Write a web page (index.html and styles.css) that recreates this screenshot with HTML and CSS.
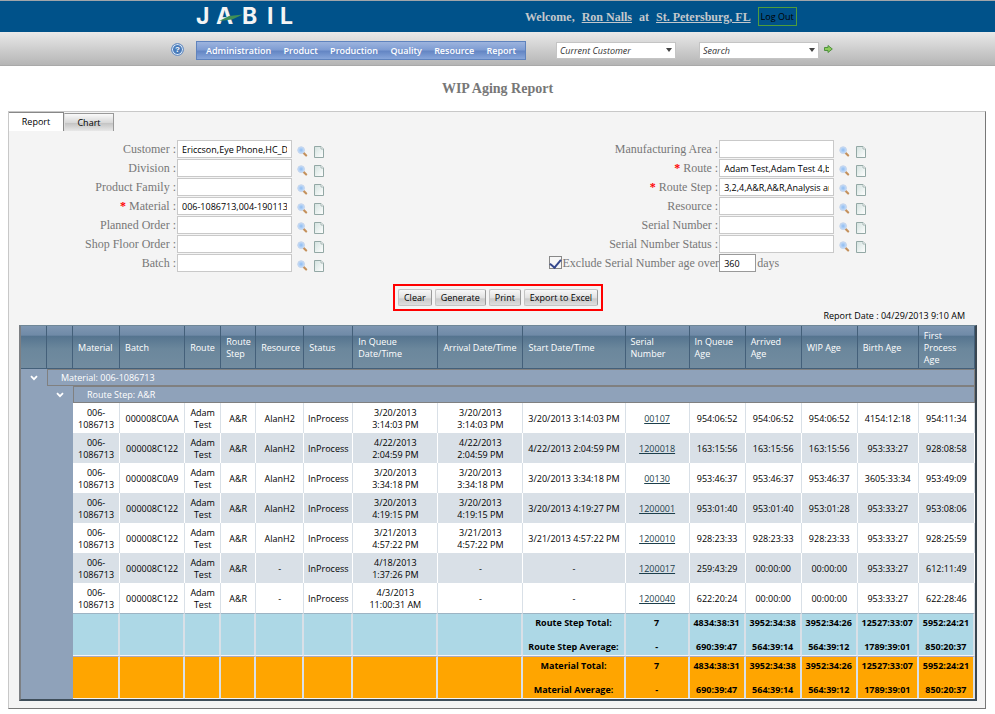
FILE: index.html
```html
<!DOCTYPE html>
<html lang="en">
<head>
<meta charset="utf-8">
<title>WIP Aging Report</title>
<link rel="stylesheet" href="styles.css">
</head>
<body>
<svg class="defs" aria-hidden="true">
  <defs>
    <radialGradient id="lens"><stop offset="0" stop-color="#8fbcf0"/><stop offset="1" stop-color="#c9dffa"/></radialGradient>
    <linearGradient id="sheet" x1="0" y1="0" x2="1" y2="1"><stop offset="0" stop-color="#d3e2df"/><stop offset="1" stop-color="#ffffff"/></linearGradient>
    <symbol id="find" viewBox="0 0 12 12">
      <path d="M7 7.300 10 10.300" stroke="#c4915c" stroke-width="2.400" stroke-linecap="round"/>
      <circle cx="4.500" cy="4.500" r="3.700" fill="url(#lens)" stroke="#c3d3ea"/>
    </symbol>
    <symbol id="page" viewBox="0 0 10 12">
      <path d="M.5.5h6.500l2.500 2.500v8.500h-9z" fill="url(#sheet)" stroke="#93a8a5"/>
      <path d="M7 .5v2.500h2.500" fill="#fff" stroke="#a7b7b5"/>
    </symbol>
    <symbol id="chev" viewBox="0 0 8 6"><path d="M1 1.200 4 4.200 7 1.200" fill="none" stroke="#fff" stroke-width="1.800"/></symbol>
  </defs>
</svg>

<header class="top">
  <svg class="logo" viewBox="0 0 110 32" role="img" aria-label="Jabil">
    <text class="wordmark" x="0 20 46 71 84" y="23">JABIL</text>
    <path d="M23 20 33 15 47 13.500 36 18.500z" fill="#3f8f56"/>
  </svg>
  <div class="account">
    <span>Welcome,</span><a href="#">Ron Nalls</a><span>at</span><a href="#">St. Petersburg, FL</a>
    <button class="logout" type="button">Log Out</button>
  </div>
</header>

<div class="toolbar">
  <button class="help" type="button" aria-label="Help">?</button>
  <nav class="menu">
    <a href="#">Administration</a><a href="#">Product</a><a href="#">Production</a><a href="#">Quality</a><a href="#">Resource</a><a href="#">Report</a>
  </nav>
  <div class="pick customer"><select aria-label="Current Customer"><option>Current Customer</option></select></div>
  <div class="pick search"><select aria-label="Search"><option>Search</option></select></div>
  <button class="go" type="button" aria-label="Go">
    <svg viewBox="0 0 9 8"><path d="M.5 2.500h3.500v-2L8.300 4 4 7.500v-2H.5z" fill="#8ccb5a" stroke="#4f9140"/></svg>
  </button>
</div>

<h1>WIP Aging Report</h1>

<main class="panel">
  <div class="tabs">
    <button class="tab active" type="button">Report</button><button class="tab" type="button">Chart</button>
  </div>

  <form class="filters">
    <div class="group">
      <div class="field"><label for="customer">Customer :</label><input id="customer" value="Ericcson,Eye Phone,HC_DELL"><button type="button" aria-label="Find"><svg class="find"><use href="#find"/></svg></button><button type="button" aria-label="Clear"><svg class="page"><use href="#page"/></svg></button></div>
      <div class="field"><label for="division">Division :</label><input id="division"><button type="button" aria-label="Find"><svg class="find"><use href="#find"/></svg></button><button type="button" aria-label="Clear"><svg class="page"><use href="#page"/></svg></button></div>
      <div class="field"><label for="family">Product Family :</label><input id="family"><button type="button" aria-label="Find"><svg class="find"><use href="#find"/></svg></button><button type="button" aria-label="Clear"><svg class="page"><use href="#page"/></svg></button></div>
      <div class="field"><label for="material"><b>*</b> Material :</label><input id="material" value="006-1086713,004-190113"><button type="button" aria-label="Find"><svg class="find"><use href="#find"/></svg></button><button type="button" aria-label="Clear"><svg class="page"><use href="#page"/></svg></button></div>
      <div class="field"><label for="planned">Planned Order :</label><input id="planned"><button type="button" aria-label="Find"><svg class="find"><use href="#find"/></svg></button><button type="button" aria-label="Clear"><svg class="page"><use href="#page"/></svg></button></div>
      <div class="field"><label for="shop">Shop Floor Order :</label><input id="shop"><button type="button" aria-label="Find"><svg class="find"><use href="#find"/></svg></button><button type="button" aria-label="Clear"><svg class="page"><use href="#page"/></svg></button></div>
      <div class="field"><label for="batch">Batch :</label><input id="batch"><button type="button" aria-label="Find"><svg class="find"><use href="#find"/></svg></button><button type="button" aria-label="Clear"><svg class="page"><use href="#page"/></svg></button></div>
    </div>
    <div class="group">
      <div class="field"><label for="area">Manufacturing Area :</label><input id="area"><button type="button" aria-label="Find"><svg class="find"><use href="#find"/></svg></button><button type="button" aria-label="Clear"><svg class="page"><use href="#page"/></svg></button></div>
      <div class="field"><label for="route"><b>*</b> Route :</label><input id="route" value="Adam Test,Adam Test 4,bill"><button type="button" aria-label="Find"><svg class="find"><use href="#find"/></svg></button><button type="button" aria-label="Clear"><svg class="page"><use href="#page"/></svg></button></div>
      <div class="field"><label for="step"><b>*</b> Route Step :</label><input id="step" value="3,2,4,A&amp;R,A&amp;R,Analysis an"><button type="button" aria-label="Find"><svg class="find"><use href="#find"/></svg></button><button type="button" aria-label="Clear"><svg class="page"><use href="#page"/></svg></button></div>
      <div class="field"><label for="resource">Resource :</label><input id="resource"><button type="button" aria-label="Find"><svg class="find"><use href="#find"/></svg></button><button type="button" aria-label="Clear"><svg class="page"><use href="#page"/></svg></button></div>
      <div class="field"><label for="serial">Serial Number :</label><input id="serial"><button type="button" aria-label="Find"><svg class="find"><use href="#find"/></svg></button><button type="button" aria-label="Clear"><svg class="page"><use href="#page"/></svg></button></div>
      <div class="field"><label for="status">Serial Number Status :</label><input id="status"><button type="button" aria-label="Find"><svg class="find"><use href="#find"/></svg></button><button type="button" aria-label="Clear"><svg class="page"><use href="#page"/></svg></button></div>
      <div class="field age"><span class="check"><input id="exclude" type="checkbox" checked><label for="exclude">Exclude Serial Number age over</label></span><input id="days" class="days" value="360"><label for="days">days</label></div>
    </div>
  </form>

  <div class="actions">
    <button type="button">Clear</button><button type="button">Generate</button><button type="button">Print</button><button type="button">Export to Excel</button>
  </div>

  <p class="date">Report Date : 04/29/2013 9:10 AM</p>

  <table>
    <colgroup>
      <col class="w26"><col class="w26"><col class="w47"><col class="w65"><col class="w36"><col class="w35"><col class="w48"><col class="w49"><col class="w85"><col class="w85"><col class="w102"><col class="w64"><col class="w56"><col class="w56"><col class="w56"><col class="w61"><col class="w56">
    </colgroup>
    <thead>
      <tr><th></th><th></th><th>Material</th><th>Batch</th><th>Route</th><th>Route Step</th><th>Resource</th><th>Status</th><th>In Queue<br>Date/Time</th><th>Arrival Date/Time</th><th>Start Date/Time</th><th>Serial<br>Number</th><th>In Queue Age</th><th>Arrived Age</th><th>WIP Age</th><th>Birth Age</th><th>First Process Age</th></tr>
    </thead>
    <tbody>
      <tr class="band"><td class="rail" rowspan="11"><button type="button" aria-label="Collapse material"><svg class="chev"><use href="#chev"/></svg></button></td><td class="title" colspan="16">Material: 006-1086713</td></tr>
      <tr class="band"><td class="rail" rowspan="10"><button type="button" aria-label="Collapse route step"><svg class="chev"><use href="#chev"/></svg></button></td><td class="title" colspan="15">Route Step: A&amp;R</td></tr>
      <tr><td>006-<br>1086713</td><td>000008C0AA</td><td>Adam Test</td><td>A&amp;R</td><td>AlanH2</td><td>InProcess</td><td>3/20/2013<br>3:14:03 PM</td><td>3/20/2013<br>3:14:03 PM</td><td>3/20/2013 3:14:03 PM</td><td><a href="#">00107</a></td><td>954:06:52</td><td>954:06:52</td><td>954:06:52</td><td>4154:12:18</td><td>954:11:34</td></tr>
      <tr class="alt"><td>006-<br>1086713</td><td>000008C122</td><td>Adam Test</td><td>A&amp;R</td><td>AlanH2</td><td>InProcess</td><td>4/22/2013<br>2:04:59 PM</td><td>4/22/2013<br>2:04:59 PM</td><td>4/22/2013 2:04:59 PM</td><td><a href="#">1200018</a></td><td>163:15:56</td><td>163:15:56</td><td>163:15:56</td><td>953:33:27</td><td>928:08:58</td></tr>
      <tr><td>006-<br>1086713</td><td>000008C0A9</td><td>Adam Test</td><td>A&amp;R</td><td>AlanH2</td><td>InProcess</td><td>3/20/2013<br>3:34:18 PM</td><td>3/20/2013<br>3:34:18 PM</td><td>3/20/2013 3:34:18 PM</td><td><a href="#">00130</a></td><td>953:46:37</td><td>953:46:37</td><td>953:46:37</td><td>3605:33:34</td><td>953:49:09</td></tr>
      <tr class="alt"><td>006-<br>1086713</td><td>000008C122</td><td>Adam Test</td><td>A&amp;R</td><td>AlanH2</td><td>InProcess</td><td>3/20/2013<br>4:19:15 PM</td><td>3/20/2013<br>4:19:15 PM</td><td>3/20/2013 4:19:27 PM</td><td><a href="#">1200001</a></td><td>953:01:40</td><td>953:01:40</td><td>953:01:28</td><td>953:33:27</td><td>953:08:06</td></tr>
      <tr><td>006-<br>1086713</td><td>000008C122</td><td>Adam Test</td><td>A&amp;R</td><td>AlanH2</td><td>InProcess</td><td>3/21/2013<br>4:57:22 PM</td><td>3/21/2013<br>4:57:22 PM</td><td>3/21/2013 4:57:22 PM</td><td><a href="#">1200010</a></td><td>928:23:33</td><td>928:23:33</td><td>928:23:33</td><td>953:33:27</td><td>928:25:59</td></tr>
      <tr class="alt"><td>006-<br>1086713</td><td>000008C122</td><td>Adam Test</td><td>A&amp;R</td><td>-</td><td>InProcess</td><td>4/18/2013<br>1:37:26 PM</td><td>-</td><td>-</td><td><a href="#">1200017</a></td><td>259:43:29</td><td>00:00:00</td><td>00:00:00</td><td>953:33:27</td><td>612:11:49</td></tr>
      <tr><td>006-<br>1086713</td><td>000008C122</td><td>Adam Test</td><td>A&amp;R</td><td>-</td><td>InProcess</td><td>4/3/2013<br>11:00:31 AM</td><td>-</td><td>-</td><td><a href="#">1200040</a></td><td>622:20:24</td><td>00:00:00</td><td>00:00:00</td><td>953:33:27</td><td>622:28:46</td></tr>
      <tr class="total step"><td></td><td></td><td></td><td></td><td></td><td></td><td></td><td></td><td>Route Step Total:<br><br>Route Step Average:</td><td>7<br><br>-</td><td>4834:38:31<br><br>690:39:47</td><td>3952:34:38<br><br>564:39:14</td><td>3952:34:26<br><br>564:39:12</td><td>12527:33:07<br><br>1789:39:01</td><td>5952:24:21<br><br>850:20:37</td></tr>
      <tr class="total material"><td></td><td></td><td></td><td></td><td></td><td></td><td></td><td></td><td>Material Total:<br><br>Material Average:</td><td>7<br><br>-</td><td>4834:38:31<br><br>690:39:47</td><td>3952:34:38<br><br>564:39:14</td><td>3952:34:26<br><br>564:39:12</td><td>12527:33:07<br><br>1789:39:01</td><td>5952:24:21<br><br>850:20:37</td></tr>
    </tbody>
  </table>
</main>
</body>
</html>
```
FILE: styles.css
```css
* { box-sizing: border-box; }
body { margin: 0; background: #fff; color: #000; font: 9px/12px "Open Sans", "Noto Sans", sans-serif; }
button, input, select { font: inherit; color: inherit; margin: 0; }
button { padding: 0; border: 0; background: none; }
svg { display: block; }
.defs { position: absolute; width: 0; height: 0; }

.top { display: grid; grid-template-columns: 329fr 470fr; align-items: center; min-height: 32px; padding-left: 196px; border-top: 1px solid #a0a5aa; background: #00528a; }
.logo { width: 110px; height: 32px; margin-bottom: -1px; }
.wordmark { font: bold 23px Inter, sans-serif; fill: #f4f4f4; }
.account { display: flex; align-items: center; gap: 7px; font: bold 12px/18px "Liberation Serif", serif; color: #c4c8cc; white-space: nowrap; }
.account a { color: inherit; }
.logout { width: 39px; height: 19px; border: 1px solid #4e9c3c; color: #000; font: 9px/12px "Open Sans", sans-serif; }

.toolbar { display: flex; align-items: center; height: 34px; padding: 2px 0 0 171px; background: linear-gradient(#e9e9e9, #b5b5b5); border-bottom: 1px solid #a9a9a9; }
.help { width: 13px; height: 13px; margin-right: 12px; border: 1px solid #6f93c4; border-radius: 50%; background: #4a7cba; box-shadow: inset 0 0 0 1px #dbe8f8; color: #fff; font: bold 8px/10px "Liberation Sans", sans-serif; }
.menu { display: flex; justify-content: space-between; width: 330px; height: 19px; margin-top: 2px; padding: 0 9px; border: 1px solid #5f83bd; background: linear-gradient(#9db4de, #7f9dd3 45%, #6486c4 55%, #88a6da); }
.menu a { color: #fff; font-size: 9px; font-weight: 600; line-height: 18px; text-decoration: none; }
.pick { position: relative; width: 120px; height: 17px; margin-top: 2px; }
.pick select { width: 100%; height: 100%; padding: 1px 3px 0; appearance: none; border: 1px solid #c4c4c4; border-radius: 0; background: #fff; color: #333; font-style: italic; }
.pick::after { content: ""; position: absolute; top: 6px; right: 4px; border: 3px solid transparent; border-top: 4px solid #444; border-bottom: 0; }
.customer { margin-left: 30px; }
.search { margin-left: 23px; }
.go { margin: 0 0 2px 5px; }
.go svg { width: 9px; height: 8px; }

h1 { margin: 14px 0 13px; color: #777; font: bold 14px/18px "Liberation Serif", serif; text-align: center; }

.panel { margin: 0 9px 4px 8px; padding: 0 8px 7px 10px; border: 1px solid #c8c8c8; border-right-color: #777; border-bottom-color: #777; background: #f4f4f4; }
.tabs { display: flex; align-items: flex-end; height: 19px; margin-left: -10px; }
.tab { width: 50px; height: 18px; border: 1px solid #999; border-left-color: #ddd; border-bottom: 0; background: linear-gradient(#fafafa, #d8d8d8 50%, #c4c4c4 55%, #e8e8e8); }
.tab.active { width: 55px; height: 19px; border-left-width: 0; border-right: 1px solid #888; border-top-color: #888; background: #fff; }

.filters { display: grid; grid-template-columns: 542fr 414fr; margin-top: 8px; color: #777; font: 12px/16px "Liberation Serif", serif; }
.field { display: grid; grid-template-columns: 158px 115px 16px 22px; align-items: center; height: 19px; }
.group + .group .field { grid-template-columns: 157px 115px 16px 22px; }
.field > label:first-child { padding-right: 1px; text-align: right; }
.field b { color: #f00; }
.field > input { width: 100%; height: 18px; padding: 1px 4px 0; border: 1px solid #c9c9c9; background: #fff; color: #000; font: 9px/12px "Open Sans", sans-serif; }
.field > button { margin: 6px 0 0 5px; }
.field > button + button { margin-left: 6px; }
.find { width: 11px; height: 11px; }
.page { width: 10px; height: 12px; }
.group + .group .age { grid-template-columns: 157px 37px 40px; }
.check { display: flex; justify-content: flex-end; align-items: center; gap: 1px; white-space: nowrap; }
.check input { display: grid; flex: none; place-items: center; width: 13px; height: 13px; appearance: none; border: 1px solid #888; background: #f6f6f6; }
.check input:checked::after { content: ""; width: 5px; height: 9px; border: solid #34478c; border-width: 0 2px 2px 0; transform: rotate(40deg); }
.field > .days { border-color: #999; }
.age > label { padding-left: 1px; }

.actions { display: flex; gap: 3px; width: max-content; margin: 12px auto 0; padding: 3px 3px; border: 2px solid #f00; }
.actions button { height: 17px; padding: 0 5px; border: 1px solid #c4c4c4; border-right-color: #999; border-radius: 2px; background: linear-gradient(#f8f8f8, #e2e2e2 50%, #cbcbcb 60%, #dedede); }
.date { margin: -1px 12px 3px 0; text-align: right; }

table { width: 100%; table-layout: fixed; border: 1px solid #6f8797; border-left: 2px solid #7c7f83; border-right: 2px solid #3a4650; border-bottom: 2px solid #3f4e5a; border-spacing: 0; background: #8fa2ba; }
.w26 { width: 26px; } .w35 { width: 35px; } .w36 { width: 36px; } .w47 { width: 47px; } .w48 { width: 48px; } .w49 { width: 49px; }
.w56 { width: 56px; } .w61 { width: 61px; } .w64 { width: 64px; } .w65 { width: 65px; } .w85 { width: 85px; } .w102 { width: 102px; }
th { height: 43px; padding: 2px 5px 0; border-right: 1px solid #44607a; border-bottom: 1px solid #44607a; background: linear-gradient(#7f97b2, #6f8aa7 22%, #55748f 24%, #6b879c 55%, #728ca0); color: #fff; font-weight: 500; text-align: left; }
td { height: 30px; padding: 2px 1px 0; border-right: 1px solid #d9e0e7; background: #fff; text-align: center; }
.alt td { border-right-color: #fff; background: #d9e0e7; }
td a { color: #1c3f4c; }
.band td { height: 17px; padding-top: 0; background: #8fa2ba; color: #fff; }
.band .title { padding-left: 13px; border: 1px solid #808080; font-weight: 500; text-align: left; }
.band .rail { padding: 6px 0 0; border: 0; vertical-align: top; }
.rail button { display: block; margin: 0 auto; }
.chev { width: 8px; height: 6px; }
.total td { height: 43px; padding: 1px 0 0; border-right: 2px solid #d9e0e7; border-bottom: 1px solid #f4f4f4; font-weight: bold; }
.total.step td { border-top: 1px solid #9db4c4; background: #add8e6; }
.total.material td { border-top: 1px solid #a9a9c0; background: #ffa500; }
```
